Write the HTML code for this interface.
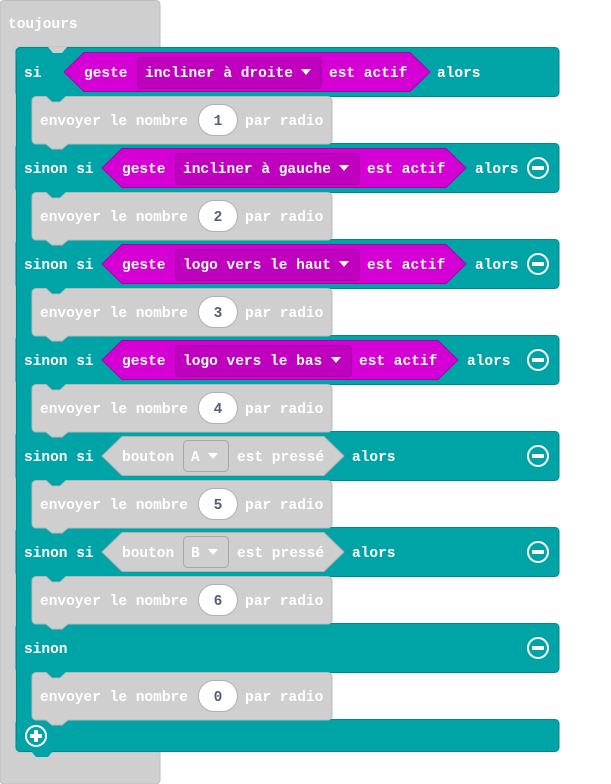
<!DOCTYPE html>
<html><head><meta charset="utf-8"><style>
html,body{margin:0;padding:0;background:#fff;width:611px;height:784px;overflow:hidden}
svg{display:block}
text{font-family:"Liberation Mono","DejaVu Sans Mono",monospace;font-weight:bold;font-size:14.5px;fill:#fff}
.n{fill:#575e75;text-anchor:middle}
</style></head><body>
<svg width="611" height="784" viewBox="0 0 611 784">
<path d="M4 0.5H156a4 4 0 0 1 4 4V47H16V752H160V780a4 4 0 0 1-4 4H4a4 4 0 0 1-4-4V4.5a4 4 0 0 1 4-4Z" fill="#cfcfcf" stroke="#bdbdbd"/>
<text x="8" y="28">toujours</text>
<g fill="#00a4a6" stroke="#00898b">
<rect x="16" y="47.5" width="543" height="49" rx="4"/>
<rect x="16" y="143.5" width="543" height="49" rx="4"/>
<rect x="16" y="239.5" width="543" height="49" rx="4"/>
<rect x="16" y="335.5" width="543" height="49" rx="4"/>
<rect x="16" y="431.5" width="543" height="49" rx="4"/>
<rect x="16" y="527.5" width="543" height="49" rx="4"/>
<rect x="16" y="623.5" width="543" height="49" rx="4"/>
<rect x="16" y="719.5" width="543" height="32" rx="4"/>
</g>
<rect x="16.5" y="60" width="60" height="680" fill="#00a4a6"/>
<line x1="16.5" y1="60" x2="16.5" y2="740" stroke="#00898b"/>
<path d="M48 47 L53 53 L62 53 L67 47Z" fill="#cfcfcf"/>
<g fill="#cfcfcf" stroke="#b8b8b8">
<path d="M36 96.5H46L52 102H60L66 96.5H328a4 4 0 0 1 4 4V140a4 4 0 0 1-4 4H68L62 149H52L46 144H36a4 4 0 0 1-4-4V100.5a4 4 0 0 1 4-4Z"/>
<path d="M36 192.5H46L52 198H60L66 192.5H328a4 4 0 0 1 4 4V236a4 4 0 0 1-4 4H68L62 245H52L46 240H36a4 4 0 0 1-4-4V196.5a4 4 0 0 1 4-4Z"/>
<path d="M36 288.5H46L52 294H60L66 288.5H328a4 4 0 0 1 4 4V332a4 4 0 0 1-4 4H68L62 341H52L46 336H36a4 4 0 0 1-4-4V292.5a4 4 0 0 1 4-4Z"/>
<path d="M36 384.5H46L52 390H60L66 384.5H328a4 4 0 0 1 4 4V428a4 4 0 0 1-4 4H68L62 437H52L46 432H36a4 4 0 0 1-4-4V388.5a4 4 0 0 1 4-4Z"/>
<path d="M36 480.5H46L52 486H60L66 480.5H328a4 4 0 0 1 4 4V524a4 4 0 0 1-4 4H68L62 533H52L46 528H36a4 4 0 0 1-4-4V484.5a4 4 0 0 1 4-4Z"/>
<path d="M36 576.5H46L52 582H60L66 576.5H328a4 4 0 0 1 4 4V620a4 4 0 0 1-4 4H68L62 629H52L46 624H36a4 4 0 0 1-4-4V580.5a4 4 0 0 1 4-4Z"/>
<path d="M36 672.5H46L52 678H60L66 672.5H328a4 4 0 0 1 4 4V716a4 4 0 0 1-4 4H68L62 725H52L46 720H36a4 4 0 0 1-4-4V676.5a4 4 0 0 1 4-4Z"/>
</g>
<path d="M31 751 L36 757 L48 757 L53 751Z" fill="#00a4a6"/>
<g fill="#fff" stroke="#b0b0b0">
<rect x="198.5" y="104.5" width="39" height="31" rx="15.5"/>
<rect x="198.5" y="200.5" width="39" height="31" rx="15.5"/>
<rect x="198.5" y="296.5" width="39" height="31" rx="15.5"/>
<rect x="198.5" y="392.5" width="39" height="31" rx="15.5"/>
<rect x="198.5" y="488.5" width="39" height="31" rx="15.5"/>
<rect x="198.5" y="584.5" width="39" height="31" rx="15.5"/>
<rect x="198.5" y="680.5" width="39" height="31" rx="15.5"/>
</g>
<g>
<text x="40" y="125">envoyer le nombre</text><text x="245" y="125">par radio</text><text class="n" x="218" y="125">1</text>
<text x="40" y="221">envoyer le nombre</text><text x="245" y="221">par radio</text><text class="n" x="218" y="221">2</text>
<text x="40" y="317">envoyer le nombre</text><text x="245" y="317">par radio</text><text class="n" x="218" y="317">3</text>
<text x="40" y="413">envoyer le nombre</text><text x="245" y="413">par radio</text><text class="n" x="218" y="413">4</text>
<text x="40" y="509">envoyer le nombre</text><text x="245" y="509">par radio</text><text class="n" x="218" y="509">5</text>
<text x="40" y="605">envoyer le nombre</text><text x="245" y="605">par radio</text><text class="n" x="218" y="605">6</text>
<text x="40" y="701">envoyer le nombre</text><text x="245" y="701">par radio</text><text class="n" x="218" y="701">0</text>
</g>
<g fill="#d400d4" stroke="#a800a8">
<path d="M64 72 L84 52.5 H410 L430 72 L410 91.5 H84Z"/>
<path d="M102 168 L122 148.5 H446 L466 168 L446 187.5 H122Z"/>
<path d="M102 264 L122 244.5 H446 L466 264 L446 283.5 H122Z"/>
<path d="M102 360 L122 340.5 H438 L458 360 L438 379.5 H122Z"/>
</g>
<g fill="#bf00bf" stroke="#9c009c">
<rect x="137.5" y="57.5" width="184" height="31" rx="4"/>
<rect x="175.5" y="153.5" width="184" height="31" rx="4"/>
<rect x="175.5" y="249.5" width="184" height="31" rx="4"/>
<rect x="175.5" y="345.5" width="176" height="31" rx="4"/>
</g>
<g fill="#cfcfcf" stroke="#b0b0b0">
<path d="M102 456 L122 436.5 H324 L344 456 L324 475.5 H122Z"/>
<path d="M102 552 L122 532.5 H324 L344 552 L324 571.5 H122Z"/>
</g>
<g fill="#cfcfcf" stroke="#a8a8a8">
<rect x="183.5" y="440.5" width="45" height="31" rx="4"/>
<rect x="183.5" y="536.5" width="45" height="31" rx="4"/>
</g>
<text x="24" y="77">si</text>
<text x="84" y="77">geste</text><text x="145" y="77">incliner à droite</text><text x="329" y="77">est actif</text><text x="437" y="77">alors</text>
<text x="24" y="173">sinon si</text>
<text x="122" y="173">geste</text><text x="183" y="173">incliner à gauche</text><text x="367" y="173">est actif</text><text x="475" y="173">alors</text>
<text x="24" y="269">sinon si</text>
<text x="122" y="269">geste</text><text x="183" y="269">logo vers le haut</text><text x="367" y="269">est actif</text><text x="475" y="269">alors</text>
<text x="24" y="365">sinon si</text>
<text x="122" y="365">geste</text><text x="183" y="365">logo vers le bas</text><text x="359" y="365">est actif</text><text x="467" y="365">alors</text>
<text x="24" y="461">sinon si</text>
<text x="122" y="461">bouton</text><text x="191" y="461">A</text><text x="237" y="461">est pressé</text><text x="352" y="461">alors</text>
<text x="24" y="557">sinon si</text>
<text x="122" y="557">bouton</text><text x="191" y="557">B</text><text x="237" y="557">est pressé</text><text x="352" y="557">alors</text>
<text x="24" y="653">sinon</text>
<g fill="#fff">
<path d="M301 69 h10 l-5 6z"/>
<path d="M339 165 h10 l-5 6z"/>
<path d="M339 261 h10 l-5 6z"/>
<path d="M331 357 h10 l-5 6z"/>
<path d="M208 453 h10 l-5 6z"/>
<path d="M208 549 h10 l-5 6z"/>
</g>
<g stroke="#fff" stroke-width="2" fill="none">
<circle cx="538" cy="168" r="10"/><circle cx="538" cy="264" r="10"/><circle cx="538" cy="360" r="10"/>
<circle cx="538" cy="456" r="10"/><circle cx="538" cy="552" r="10"/><circle cx="538" cy="648" r="10"/>
<circle cx="36" cy="736" r="10"/>
</g>
<g fill="#fff">
<rect x="532" y="166" width="12" height="4" rx="1"/><rect x="532" y="262" width="12" height="4" rx="1"/>
<rect x="532" y="358" width="12" height="4" rx="1"/><rect x="532" y="454" width="12" height="4" rx="1"/>
<rect x="532" y="550" width="12" height="4" rx="1"/><rect x="532" y="646" width="12" height="4" rx="1"/>
<rect x="30" y="734" width="12" height="4" rx="1"/><rect x="34" y="730" width="4" height="12" rx="1"/>
</g>
</svg>
</body></html>
